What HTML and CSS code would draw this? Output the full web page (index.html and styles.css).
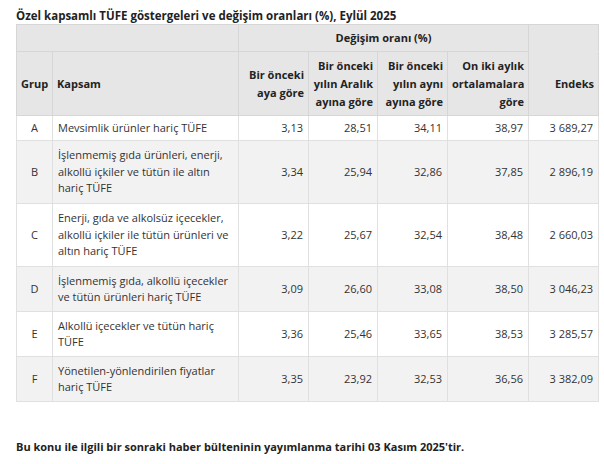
FILE: index.html
```html
<!DOCTYPE html>
<html lang="tr">
<head>
<meta charset="utf-8">
<title>Özel kapsamlı TÜFE göstergeleri</title>
<link rel="stylesheet" href="styles.css">
</head>
<body>
<div class="page">
  <div class="title">Özel kapsamlı TÜFE göstergeleri ve değişim oranları (%), Eylül 2025</div>
  <table class="data">
    <colgroup>
      <col class="c-grup"><col class="c-kapsam"><col class="c-n1"><col class="c-n2"><col class="c-n3"><col class="c-n4"><col class="c-end">
    </colgroup>
    <thead>
      <tr class="h1">
        <th colspan="2"></th>
        <th colspan="4" class="center">Değişim oranı (%)</th>
        <th class="blank-top"></th>
      </tr>
      <tr class="h2">
        <th class="center">Grup</th>
        <th class="left">Kapsam</th>
        <th class="num">Bir önceki<br>aya göre</th>
        <th class="num">Bir önceki<br>yılın Aralık<br>ayına göre</th>
        <th class="num">Bir önceki<br>yılın aynı<br>ayına göre</th>
        <th class="num">On iki aylık<br>ortalamalara<br>göre</th>
        <th class="num">Endeks</th>
      </tr>
    </thead>
    <tbody>
      <tr class="l1">
        <td class="center">A</td><td>Mevsimlik ürünler hariç TÜFE</td>
        <td class="num">3,13</td><td class="num">28,51</td><td class="num">34,11</td><td class="num">38,97</td><td class="num">3 689,27</td>
      </tr>
      <tr class="l3 alt">
        <td class="center">B</td><td>İşlenmemiş gıda ürünleri, enerji, alkollü içkiler ve tütün ile altın hariç TÜFE</td>
        <td class="num">3,34</td><td class="num">25,94</td><td class="num">32,86</td><td class="num">37,85</td><td class="num">2 896,19</td>
      </tr>
      <tr class="l3">
        <td class="center">C</td><td>Enerji, gıda ve alkolsüz içecekler, alkollü içkiler ile tütün ürünleri ve altın hariç TÜFE</td>
        <td class="num">3,22</td><td class="num">25,67</td><td class="num">32,54</td><td class="num">38,48</td><td class="num">2 660,03</td>
      </tr>
      <tr class="l2 alt">
        <td class="center">D</td><td>İşlenmemiş gıda, alkollü içecekler ve tütün ürünleri hariç TÜFE</td>
        <td class="num">3,09</td><td class="num">26,60</td><td class="num">33,08</td><td class="num">38,50</td><td class="num">3 046,23</td>
      </tr>
      <tr class="l2">
        <td class="center">E</td><td>Alkollü içecekler ve tütün hariç TÜFE</td>
        <td class="num">3,36</td><td class="num">25,46</td><td class="num">33,65</td><td class="num">38,53</td><td class="num">3 285,57</td>
      </tr>
      <tr class="l2 alt">
        <td class="center">F</td><td>Yönetilen-yönlendirilen fiyatlar hariç TÜFE</td>
        <td class="num">3,35</td><td class="num">23,92</td><td class="num">32,53</td><td class="num">36,56</td><td class="num">3 382,09</td>
      </tr>
    </tbody>
  </table>
  <p class="note">Bu konu ile ilgili bir sonraki haber bülteninin yayımlanma tarihi 03 Kasım 2025'tir.</p>
</div>
</body>
</html>
```
FILE: styles.css
```css
html, body {
  margin: 0;
  padding: 0;
  background: #ffffff;
}
body {
  font-family: "Open Sans", "Noto Sans", sans-serif;
  color: #333333;
  font-size: 11px;
}
.page {
  padding: 8px 6px 0 16px;
}
.title {
  font-weight: bold;
  font-size: 11.5px;
  color: #222222;
  line-height: 16px;
}
.data {
  border-collapse: collapse;
  table-layout: fixed;
  width: 582px;
  margin-top: 0;
}
.c-grup { width: 36px; }
.c-kapsam { width: 186px; }
.c-n1 { width: 70px; }
.c-n2 { width: 69px; }
.c-n3 { width: 70px; }
.c-n4 { width: 81px; }
.c-end { width: 70px; }
.data th {
  background: #e6e6e6;
  border: 1px solid #d6d6d6;
  font-weight: bold;
  color: #222222;
  line-height: 18px;
  padding: 3px 4px;
  vertical-align: middle;
  white-space: nowrap;
}
.data th.blank-top {
  border-bottom-color: #e6e6e6;
}
.data tr.h1 { height: 27px; }
.data tr.h2 { height: 64px; }
.data td {
  border: 1px solid #e0e0e0;
  line-height: 16.5px;
  padding: 3px 5px;
  vertical-align: middle;
  text-align: left;
}
.data tr.l1 { height: 25px; }
.data tr.l2 { height: 45px; }
.data tr.l3 { height: 63px; }
.data tr.alt td { background: #f2f2f2; }
.data .center { text-align: center; }
.data .left { text-align: left; }
.data .num { text-align: right; }
.note {
  margin: 37px 0 0 0;
  font-weight: bold;
  font-size: 11px;
  line-height: 15px;
  color: #222222;
}
```
